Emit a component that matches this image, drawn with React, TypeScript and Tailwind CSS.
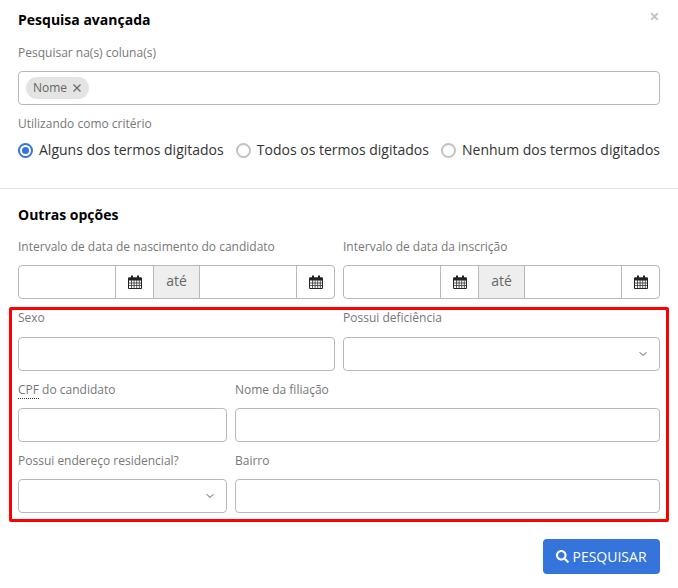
import { ChevronDown } from "lucide-react";
import { FaSearch, FaTimes } from "react-icons/fa";

const inputClass = "h-[34px] w-full rounded-[4px] border border-[#b9b9b9] bg-white";

const CalendarIcon = () => (
  <svg viewBox="0 0 14 14" className="h-[14px] w-[14px]" fill="none">
    <path d="M.5 3h13v10.500H.5z" fill="#fff" stroke="#222" strokeWidth="1" />
    <path d="M.5 2.500h13v3H.5z" fill="#222" />
    <path d="M3 .5h2v3H3zM9 .5h2v3H9z" fill="#222" />
    <path d="M1 8h12M1 10.500h12M3.500 5v8M6.100 5v8M8.700 5v8M11.300 5v8" stroke="#333" strokeWidth=".8" />
  </svg>
);

const Field = ({
  label,
  children,
  labelGap = "mb-[8px]",
}: {
  label: React.ReactNode;
  children: React.ReactNode;
  labelGap?: string;
}) => (
  <div>
    <label className={`${labelGap} block h-[20px] text-[12px] leading-[20px] text-[#777]`}>{label}</label>
    {children}
  </div>
);

const DateRange = () => (
  <div className="flex h-[34px] rounded-[4px] border border-[#b9b9b9]">
    <div className="flex-1" />
    <div className="flex w-[38px] items-center justify-center border-l border-[#b9b9b9]">
      <CalendarIcon />
    </div>
    <div className="flex w-[47px] items-center justify-center border-x border-[#b9b9b9] bg-[#eee] pb-[4px] text-[14px] text-[#666]">
      até
    </div>
    <div className="flex-1" />
    <div className="flex w-[38px] items-center justify-center border-l border-[#b9b9b9]">
      <CalendarIcon />
    </div>
  </div>
);

const SelectBox = () => (
  <div className={`${inputClass} flex items-center justify-end pr-[10px]`}>
    <ChevronDown size={12} strokeWidth={2} className="text-[#555]" />
  </div>
);

const Radio = ({ label, checked }: { label: string; checked?: boolean }) => (
  <label className="flex items-center gap-[6px] text-[14px] leading-[20px] text-[#333]">
    {checked ? (
      <span className="flex h-[15px] w-[15px] items-center justify-center rounded-full border-2 border-[#3574db] bg-white">
        <span className="h-[7px] w-[7px] rounded-full bg-[#3574db]" />
      </span>
    ) : (
      <span className="h-[15px] w-[15px] rounded-full border-2 border-[#c2c2c2] bg-white" />
    )}
    {label}
  </label>
);

export default function App() {
  return (
    <div className="relative h-[588px] w-[678px] overflow-hidden bg-white font-['Open_Sans',sans-serif]">
      <FaTimes size={11} className="absolute right-[18px] top-[11px] text-[#c4c4c4]" />

      {/* Pesquisa */}
      <div className="h-[189px] border-b border-[#e5e5e5] px-[18px] pt-[10px]">
        <h4 className="text-[14px] font-bold leading-[20px] text-black">Pesquisa avançada</h4>
        <p className="mt-[13px] text-[12px] leading-[20px] text-[#777]">Pesquisar na(s) coluna(s)</p>
        <div className={`${inputClass} mt-[8px] flex items-center pl-[7px]`}>
          <span className="flex h-[22px] items-center gap-[6px] rounded-full bg-[#e4e4e4] pl-[7px] pr-[8px] text-[12px] text-[#666]">
            Nome
            <svg viewBox="0 0 8 8" className="h-[8px] w-[8px]">
              <path d="M.5 .5l7 7M7.500 .5l-7 7" stroke="#666" strokeWidth="1.200" />
            </svg>
          </span>
        </div>
        <p className="mt-[9px] text-[12px] leading-[20px] text-[#777]">Utilizando como critério</p>
        <div className="mt-[6px] flex justify-between">
          <Radio label="Alguns dos termos digitados" checked />
          <Radio label="Todos os termos digitados" />
          <Radio label="Nenhum dos termos digitados" />
        </div>
      </div>

      {/* Outras opcoes */}
      <div className="px-[18px] pt-[16px]">
        <h4 className="text-[14px] font-bold leading-[20px] text-black">Outras opções</h4>
        <div className="mt-[12px] grid grid-cols-2 gap-x-[8px]">
          <Field label="Intervalo de data de nascimento do candidato">
            <DateRange />
          </Field>
          <Field label="Intervalo de data da inscrição">
            <DateRange />
          </Field>
        </div>

        <div className="-mx-[9px] mt-[8px] rounded-[2px] border-[3px] border-[#ff0000] px-[6px] pb-[6px]">
          <div className="-mt-[2px] grid grid-cols-2 gap-x-[8px]">
            <Field label="Sexo" labelGap="mb-[9px]">
              <div className={inputClass} />
            </Field>
            <Field label="Possui deficiência" labelGap="mb-[9px]">
              <SelectBox />
            </Field>
          </div>
          <div className="mt-[9px] grid grid-cols-[209px_1fr] gap-x-[8px] gap-y-[9px]">
            <Field
              label={
                <>
                  <span className="border-b border-dotted border-[#333]">CPF</span> do candidato
                </>
              }
            >
              <div className={inputClass} />
            </Field>
            <Field label="Nome da filiação">
              <div className={inputClass} />
            </Field>
            <Field label="Possui endereço residencial?">
              <SelectBox />
            </Field>
            <Field label="Bairro">
              <div className={inputClass} />
            </Field>
          </div>
        </div>

        <div className="mt-[17px] flex justify-end">
          <button className="flex h-[35px] w-[117px] items-center justify-center gap-[3px] rounded-[4px] bg-[#3574db] text-[14px] text-white">
            <FaSearch size={13} /> PESQUISAR
          </button>
        </div>
      </div>
    </div>
  );
}
